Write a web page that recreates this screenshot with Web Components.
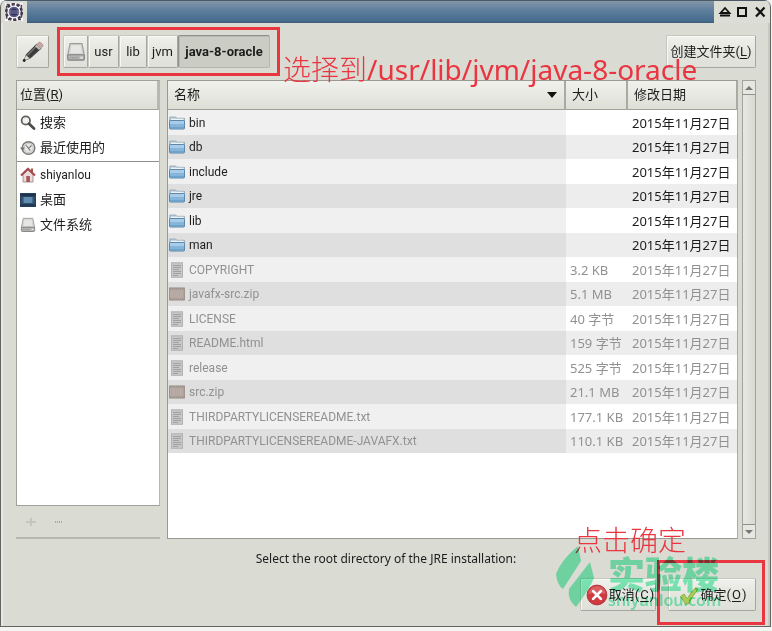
<!DOCTYPE html>
<html lang="zh-CN">
<head>
<meta charset="utf-8">
<title>JRE</title>
<style>
html{background:#f4f4f2}
body{margin:0;min-height:100vh;display:flex;flex-direction:column;font:13px/16px Roboto,"Noto Sans CJK SC",sans-serif;color:#1c1c1c}
</style>
</head>
<body>
<jre-dialog></jre-dialog>
<script>
const svg = (box, body, size = box) => `<svg viewBox="0 0 ${box} ${box}" width="${size}" height="${size}" aria-hidden="true">${body}</svg>`;
const ICONS = {
  app: svg(20, '<rect x="1" y="1" width="18" height="18" fill="#fbf9fb"/><circle cx="10" cy="10" r="7.8" fill="none" stroke="#40374a" stroke-width="2.6" stroke-dasharray="3 1.9"/><rect x="2.6" y="2.6" width="14.8" height="14.8" fill="none" stroke="#4a4152" stroke-width="1.6" stroke-dasharray="3 2"/><circle cx="10" cy="10" r="5.8" fill="#5b5c86" stroke="#f4f2f8" stroke-width="1"/><circle cx="10" cy="10" r="3.6" fill="#302d5c"/><path d="M5 9h10M5 11h10" stroke="#a7a6c4" stroke-width=".7"/>'),
  pencil: svg(24, '<path d="M3.500 20l2-5L15.500 4.800l4 3.600L9 18z" fill="#3b3b3b" stroke="#444" stroke-width="1.400"/><path d="M6.500 15.500L15.600 5.800" stroke="#777" stroke-width="1.200"/><path d="M15.500 4.800l2.200-2.300q.9-.8 2 .1l2 1.900q.9 1 0 1.900l-2.200 2z" fill="#c9a8a4" stroke="#9b8a88" stroke-width=".7"/><path d="M14 6.300l4 3.600 1.500-1.500-4-3.600z" fill="#bdbdbb"/><path d="M3 20.500l2-5 3.600 2.700z" fill="#e3dccf" stroke="#aaa" stroke-width=".5"/><circle cx="3.200" cy="20.500" r="1.400" fill="#222"/>'),
  drive: svg(18, '<path d="M3.600 1.500h10.800L16.500 12H1.500z" fill="#d6d6d5" stroke="#9c9c9c" stroke-width="1"/><path d="M5 3h8l1 7H4z" fill="#e6e6e5"/><rect x="1.500" y="11.500" width="15" height="4.800" rx="1" fill="#b4b4b3" stroke="#808080" stroke-width="1"/><path d="M3.500 14h8" stroke="#919191" stroke-width="1.200" stroke-dasharray="1 1"/><path d="M13 14h2" stroke="#eee" stroke-width="1.500"/>', 16),
  drivebig: '',
  search: svg(16, '<circle cx="5.800" cy="5.500" r="4.200" fill="#f1f3f3" stroke="#5f625f" stroke-width="1.800"/><path d="M9 8.800l5 4.700" stroke="#4a4c4a" stroke-width="2.800" stroke-linecap="round"/>'),
  recent: svg(16, '<circle cx="8.500" cy="8" r="6.300" fill="#e9e9e8" stroke="#777977" stroke-width="1.400"/><circle cx="8.500" cy="8" r="4.600" fill="none" stroke="#bbb" stroke-width=".8"/><path d="M5.800 5l2.700 3.300 3-2.800M8.500 8.300l1.800 2.400" fill="none" stroke="#777" stroke-width="1.100"/><path d="M0 7.500h5L2.500 11z" fill="#737573"/>'),
  home: svg(16, '<path d="M3 7.500V15h10V7.500L8 3z" fill="#eadcdb" stroke="#94807e" stroke-width=".8"/><path d="M11 1.500h2v4h-2z" fill="#a55"/><path d="M1 8.500L8 1.700l7 6.800" fill="none" stroke="#a94a4d" stroke-width="2.100" stroke-linejoin="round"/><rect x="6.300" y="9" width="3.600" height="6" fill="#a9555a"/>'),
  desktop: svg(16, '<rect x=".5" y="1.500" width="15" height="13" fill="#32516f" stroke="#263f5c"/><rect x="1" y="2" width="14" height="2.500" fill="#1e344d"/><rect x="3.500" y="5" width="9" height="6" fill="#5f8cb0"/><path d="M1 12h14v2.500H1z" fill="#233a55"/>'),
  folder: svg(16, '<path d="M.8 2h6l1 1.300h7.700v5H.8z" fill="#b9cbd9" stroke="#8ba3b6" stroke-width=".8"/><rect x="2" y="3.700" width="12.500" height="3" fill="#edf2f5"/><rect x=".5" y="5.500" width="15" height="8.500" rx=".8" fill="#86b5da" stroke="#5c88ac"/><path d="M1 6h14v3H1z" fill="#a9cde8"/><path d="M1 12h14v1.500H1z" fill="#6fa3cb"/>'),
  text: svg(16, '<rect x="2.500" y=".8" width="11" height="14.500" fill="#c7c7c7" stroke="#b2b2b2"/><path d="M4 3.500h8M4 5.500h8M4 7.500h6M4 9.500h8M4 11.500h8M4 13.500h5" stroke="#a0a0a0" stroke-width="1"/>'),
  zip: svg(16, '<rect x=".7" y="2" width="14.600" height="12" fill="#b3a7a0" stroke="#93877f"/><path d="M1 4h14M1 6h14M1 8h14M1 10h14M1 12h14" stroke="#8f837c" stroke-width="1" stroke-dasharray="1 1"/><path d="M1 5h14M1 7h14M1 9h14M1 11h14" stroke="#d0c6c0" stroke-width="1" stroke-dasharray="1 1"/>'),
  cancel: svg(24, '<circle cx="12" cy="12" r="10.800" fill="#cf3a41" stroke="#ad3036"/><path d="M2.500 11Q3.500 3 12 2.200 20.500 3 21.500 11 12 8.500 2.500 11z" fill="#e27a7c" opacity=".6"/><path d="M7.800 7.800l8.400 8.400M16.200 7.800l-8.400 8.400" stroke="#fff" stroke-width="3" stroke-linecap="round"/>', 22),
  ok: svg(22, '<path d="M2.500 12.500L6 10l3.300 4.800Q13 7.500 18 3.500l2 2Q14.500 11.500 10.500 20H7.500z" fill="#aacb58" stroke="#8fb04a" stroke-width="1"/>'),
  sort: svg(10, '<path d="M0 2h10L5 8z" fill="#111"/>'),
  plus: svg(16, '<path d="M3 8h10M8 4v8" stroke="#c4c5bd" stroke-width="2"/>'),
  minus: svg(16, '<path d="M4 8h8" stroke="#a9aaa3" stroke-width="2" stroke-dasharray="1 1"/>'),
  shade: svg(14, '<path d="M2.500 8L7 3l4.500 5zM2 10.500h10" fill="none" stroke="#111" stroke-width="1.800"/>'),
  max: svg(14, '<rect x="3" y="3" width="8" height="8" fill="none" stroke="#111" stroke-width="2"/>'),
  close: svg(14, '<path d="M3 2.500l8.500 9M11.500 2.500L3 11.500" stroke="#111" stroke-width="2.200"/>'),
  up: svg(10, '<path d="M1 7h8L5 3z" fill="#777"/>'),
  down: svg(10, '<path d="M1 3h8L5 7z" fill="#777"/>')
};
ICONS.drivebig = ICONS.drive.replace('width="16" height="16"', 'width="20" height="20"');
const define = (name, html) => customElements.define(name, class extends HTMLElement {
  constructor() { super(); this.attachShadow({ mode: 'open' }).innerHTML = typeof html === 'function' ? html(this) : html; }
});

customElements.define('ui-icon', class extends HTMLElement {
  connectedCallback() {
    const root = this.shadowRoot || this.attachShadow({ mode: 'open' });
    root.innerHTML = `<style>:host{display:inline-flex;flex:none}svg{display:block}</style>${ICONS[this.getAttribute('name')]}`;
  }
});

customElements.define('ui-button', class extends HTMLElement {
  connectedCallback() {
    const root = this.shadowRoot || this.attachShadow({ mode: 'open' });
    root.innerHTML = `<style>
      :host{display:flex}
      button{font:inherit;color:inherit;margin:0;width:100%;height:33px;padding:0 var(--pad,0);display:flex;align-items:center;justify-content:center;gap:var(--gap,0);white-space:nowrap;
        border:1px solid;border-color:#c6c7bf #a5a69e #a5a69e #c6c7bf;border-radius:2px;background:linear-gradient(#f0f0ec,#e5e6e0 50%,#dfe0d9);box-shadow:inset 1px 1px #f8f8f5}
      :host([pressed]) button{background:#cbccc4;border-color:#8f9089 #b5b6ae #b5b6ae #8f9089;box-shadow:inset 1px 1px #b9bab2;font-weight:bold}
      ::slotted(u){text-underline-offset:2px}
    </style><button type="button" ${this.title ? `aria-label="${this.title}"` : ''} ${this.hasAttribute('pressed') ? 'aria-pressed="true"' : ''}><slot></slot></button>`;
  }
});

define('title-bar', `<style>
  :host{display:flex;height:22px;background:linear-gradient(#8496a8,#60809e 40%,#466b8d 90%,#3b5c7b);border-top:1px solid #4c5966}
  .app,.tools{display:flex;align-items:center;background:#dcddd5}
  .app{width:26px;justify-content:center}
  .tools{margin-left:auto;width:56px;justify-content:space-evenly}
  button{border:0;padding:0;background:none;display:flex}
</style>
<span class="app"><ui-icon name="app"></ui-icon></span>
<span class="tools"><button aria-label="shade"><ui-icon name="shade"></ui-icon></button><button aria-label="maximize"><ui-icon name="max"></ui-icon></button><button aria-label="close"><ui-icon name="close"></ui-icon></button></span>`);

define('mark-frame', `<style>:host{position:absolute;inset:var(--inset);border:3px solid #e93640;pointer-events:none}</style>`);
define('mark-text', `<style>:host{position:absolute;white-space:nowrap;color:#ea3540;pointer-events:none;font:300 28px/32px "Noto Sans CJK SC",sans-serif}
  ::slotted(span){font-family:"Noto Sans",sans-serif;font-weight:400}</style><slot></slot>`);

define('path-bar', `<style>
  :host{display:flex;gap:14px;align-items:center}
  nav{display:flex;position:relative}
  .drive{width:25px}
  .short{width:31px}.mid{width:28px}.here{width:92px}
  .edit{width:33px}
  .new{margin-left:auto;width:90px}
  mark-frame{--inset:-8px -10px -8px -6px}
  mark-text{left:220px;top:17px}
</style>
<ui-button class="edit" title="edit"><ui-icon name="pencil"></ui-icon></ui-button>
<nav><ui-button class="drive" title="root"><ui-icon name="drivebig"></ui-icon></ui-button><ui-button class="short">usr</ui-button><ui-button class="mid">lib</ui-button><ui-button class="short">jvm</ui-button><ui-button class="here" pressed>java-8-oracle</ui-button>
<mark-frame></mark-frame><mark-text>选择到<span>/usr/lib/jvm/java-8-oracle</span></mark-text></nav>
<ui-button class="new">创建文件夹(<u>L</u>)</ui-button>`);

define('place-item', `<style>
  :host{display:flex;align-items:center;gap:4px;height:25px;padding-left:3px}
  :host([latin]){font-size:12px}
  :host([divided]){border-top:1px solid #8e8f88;margin-top:1px}
</style><slot name="icon"></slot><slot></slot>`);

define('places-panel', `<style>
  :host{display:flex;flex-direction:column;border-bottom:2px solid #b6b7ae}
  .list{flex:1;background:#fff;border:1px solid #a0a19a;border-right-color:#b7b8b0}
  .head{height:28px;padding-left:3px;display:flex;align-items:center;background:linear-gradient(#efefea,#dddfd6);border-bottom:1px solid #a3a49c;border-right:2px solid #b7b8b0}
  .foot{height:31px;display:flex;align-items:center;gap:12px;padding-left:7px}
  button{border:0;background:none;padding:0;display:flex}
</style>
<div class="list"><div class="head"><span>位置(<u>R</u>)</span></div>
<place-item><ui-icon slot="icon" name="search"></ui-icon>搜索</place-item>
<place-item><ui-icon slot="icon" name="recent"></ui-icon>最近使用的</place-item>
<place-item divided latin><ui-icon slot="icon" name="home"></ui-icon>shiyanlou</place-item>
<place-item><ui-icon slot="icon" name="desktop"></ui-icon>桌面</place-item>
<place-item><ui-icon slot="icon" name="drive"></ui-icon>文件系统</place-item></div>
<div class="foot"><button aria-label="add" disabled><ui-icon name="plus"></ui-icon></button><button aria-label="remove" disabled><ui-icon name="minus"></ui-icon></button></div>`);

const FILES = [['folder','bin'],['folder','db'],['folder','include'],['folder','jre'],['folder','lib'],['folder','man'],
  ['text','COPYRIGHT','3.2 KB'],['zip','javafx-src.zip','5.1 MB'],['text','LICENSE','40 字节'],['text','README.html','159 字节'],
  ['text','release','525 字节'],['zip','src.zip','21.1 MB'],['text','THIRDPARTYLICENSEREADME.txt','177.1 KB'],['text','THIRDPARTYLICENSEREADME-JAVAFX.txt','110.1 KB']];
define('file-list', () => `<style>
  :host{display:block;background:#fff;border:1px solid #989991;border-right-color:#aaaba3}
  table{width:100%;border-collapse:separate;border-spacing:0;table-layout:fixed}
  th,td{padding:0;text-align:left;white-space:nowrap;font-weight:normal}
  .size{width:62px}.date{width:109px}
  th{height:28px;padding-left:6px;background:linear-gradient(#f1f1ed,#dddfd6);border-bottom:1px solid #a0a199;border-right:2px solid #a9aaa2}
  th:last-child{border-right-width:1px}
  th:first-child div{display:flex;justify-content:space-between;align-items:center;padding-right:7px}
  tr:nth-child(odd) td{height:25px;background:#fff}
  tr:nth-child(even) td{height:24px;background:#ededed}
  tbody tr:nth-child(odd) td:first-child{background:#f0f0f0}
  tbody tr:nth-child(even) td:first-child{background:#dfdfdf}
  td + td{padding-left:4px;font-family:"Noto Sans","Noto Sans CJK SC",sans-serif}
  .name{display:flex;align-items:center;gap:4px;padding-left:1px;font-size:12px}
  .off td{color:#919191}
</style>
<table><colgroup><col><col class="size"><col class="date"></colgroup>
<thead><tr><th><div>名称<ui-icon name="sort"></ui-icon></div></th><th>大小</th><th>修改日期</th></tr></thead>
<tbody>${FILES.map(([icon, name, size]) => `<tr${size ? ' class="off"' : ''}><td><div class="name"><ui-icon name="${icon}"></ui-icon>${name}</div></td><td>${size || ''}</td><td>2015年11月27日</td></tr>`).join('')}</tbody></table>`);

define('scroll-rail', `<style>
  :host{display:flex;flex-direction:column;width:12px;border:1px solid #a2a39b;background:#dcddd5}
  button{height:13px;border:0;padding:0;display:flex;justify-content:center;align-items:center;background:#e6e7e1}
  i{flex:1;border:solid #8f9089;border-width:1px 0;background:linear-gradient(90deg,#e8e8e3,#d8d9d1)}
</style><button aria-label="up"><ui-icon name="up"></ui-icon></button><i></i><button aria-label="down"><ui-icon name="down"></ui-icon></button>`);

define('brand-mark', `<style>
  :host{position:absolute;right:34px;bottom:3px;display:flex;gap:14px;align-items:flex-end;color:#82f2c1;mix-blend-mode:multiply;pointer-events:none}
  div{display:flex;flex-direction:column;width:114px}
  b{font:900 37px/38px "Noto Sans CJK SC",sans-serif}
  small{font:16px/16px "Noto Sans",sans-serif;font-weight:600}
  svg{display:block}
</style>
<svg width="38" height="62" viewBox="0 0 38 62" fill="currentColor" aria-hidden="true"><path d="M22 0L25 15 7 43Q1 39 0 28Q5 14 22 0z"/><path d="M34 16L38 32Q33 44 20 61Q11 54 13 43z"/></svg>
<div><b>实验楼</b><small>shiyanlou.com</small></div>`);

define('dialog-actions', `<style>
  :host{display:flex;justify-content:flex-end;gap:12px;position:relative;padding-top:11px}
  .cancel{width:76px;--gap:1px}.ok{width:88px;--gap:1px}
  .cancel{--pad:5px 0 9px}
  span{position:relative;display:flex}
  mark-frame{--inset:-18px -9px -14px -11px}
  mark-text{right:70px;top:-55px}
</style>
<ui-button class="cancel"><ui-icon name="cancel"></ui-icon>取消(<u>C</u>)</ui-button>
<span><ui-button class="ok"><ui-icon name="ok"></ui-icon>确定(<u>O</u>)</ui-button><mark-frame></mark-frame><mark-text>点击确定</mark-text></span>
<brand-mark></brand-mark>`);

define('jre-dialog', `<style>
  :host{flex:1;display:flex;flex-direction:column;box-sizing:border-box;margin:0 1px 4px 0;background:#dadbd3;border:1px solid #63645f;border-top:0;border-radius:7px 7px 0 0;overflow:hidden;box-shadow:inset 2px 0 #e8e9e3,inset -2px 0 #c8c9c1}
  main{flex:1;display:flex;flex-direction:column;padding:12px 14px 15px 15px}
  .panes{flex:1;display:grid;grid-template-columns:144px minmax(0,1fr) auto;column-gap:7px;margin-top:12px}
  .files{display:grid;grid-template-columns:minmax(0,1fr) auto;gap:4px;grid-column:2/4}
  p{margin:12px 0 0;text-align:center;font:12px/16px "Noto Sans",sans-serif}
</style>
<title-bar></title-bar>
<main><path-bar></path-bar>
<div class="panes"><places-panel></places-panel><div class="files"><file-list></file-list><scroll-rail></scroll-rail></div></div>
<p>Select the root directory of the JRE installation:</p>
<dialog-actions></dialog-actions></main>`);
</script>
</body>
</html>
